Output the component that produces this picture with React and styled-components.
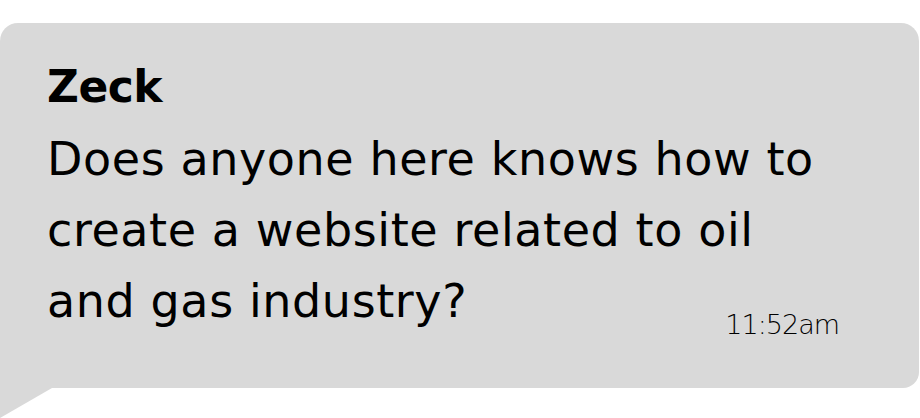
import styled, { createGlobalStyle } from "styled-components"

const GlobalStyle = createGlobalStyle`
  * { box-sizing: border-box; }
  body {
    margin: 0;
    background: #fff;
    font-family: "DejaVu Sans", "Open Sans", sans-serif;
    color: #000;
  }
`

export default function App() {
  const msg = {
    author: "Zeck",
    text: "Does anyone here knows how to create a website related to oil and gas industry?",
    time: "11:52am",
  }
  return (
    <>
      <GlobalStyle />
      <Page>
        <Bubble>
          <Author>{msg.author}</Author>
          <Body>
            <Text>{msg.text}</Text>
            <Time>{msg.time}</Time>
          </Body>
        </Bubble>
      </Page>
    </>
  )
}

const Page = styled.div`
  width: 920px;
  height: 418px;
  padding-top: 23px;
  overflow: hidden;
`
const Bubble = styled.div`
  position: relative;
  width: 919px;
  height: 365px;
  background: #d9d9d9;
  border-radius: 18px 18px 16px 0;
  padding: 38px 80px 0 47px;
  &::after {
    content: "";
    position: absolute;
    left: 0;
    top: 100%;
    border-top: 30px solid #d9d9d9;
    border-right: 52px solid transparent;
  }
`
const Author = styled.div`
  font-size: 44px;
  font-weight: 700;
  line-height: 1.2;
  letter-spacing: -0.5px;
`
const Body = styled.div`
  display: grid;
  margin-top: 10px;
`
const Text = styled.p`
  grid-area: 1 / 1;
  margin: 0;
  font-size: 46px;
  line-height: 71px;
  letter-spacing: 0.6px;
`
const Time = styled.span`
  grid-area: 1 / 1;
  justify-self: end;
  align-self: end;
  margin-bottom: -5px;
  font-size: 27px;
  font-weight: 200;
  line-height: 1.2;
  letter-spacing: -1px;
`
